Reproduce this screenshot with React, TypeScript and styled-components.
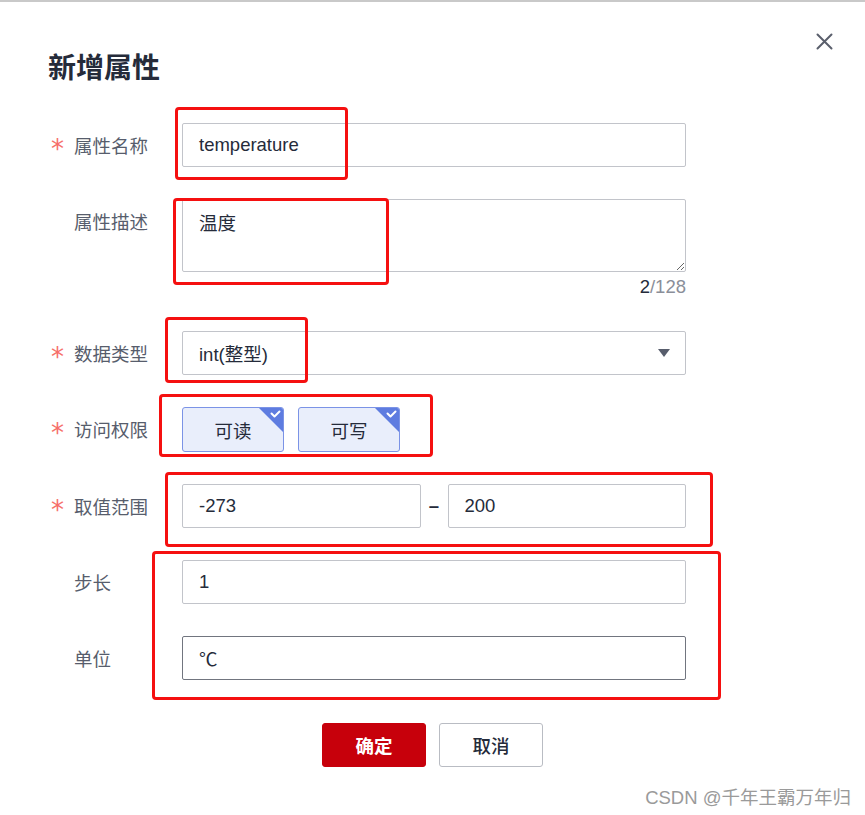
import React from "react";
import styled, { createGlobalStyle } from "styled-components";

const Global = createGlobalStyle`
  html, body { margin: 0; padding: 0; background: #fff; }
  body { font-family: "Liberation Sans", "Noto Sans CJK SC", sans-serif; }
  * { box-sizing: border-box; }
`;

const FONT = `"Liberation Sans", "Noto Sans CJK SC", sans-serif`;

const Dialog = styled.div`
  position: relative;
  width: 865px;
  height: 815px;
  border-top: 2px solid #c9c9c9;
  background: #fff;
  font-family: ${FONT};
`;

const Header = styled.div`
  display: flex;
  justify-content: space-between;
  align-items: flex-start;
  padding: 31px 32px 0 48px;
`;

const Title = styled.h1`
  margin: 13px 0 0 0;
  font-size: 28px;
  line-height: 40px;
  font-weight: 700;
  color: #252b3a;
  font-family: "Noto Sans CJK SC", sans-serif;
`;

const CloseBtn = styled.button`
  border: none;
  background: none;
  padding: 0;
  width: 17px;
  height: 17px;
  display: flex;
  cursor: pointer;
`;

const Form = styled.div`
  margin-top: 37px;
  padding-left: 52px;
`;

const Row = styled.div`
  display: grid;
  grid-template-columns: 130px 504px;
  align-items: start;
  margin-bottom: 32px;
`;

const Label = styled.div`
  display: flex;
  align-items: center;
  height: 44px;
  font-size: 18.5px;
  color: #575d6c;
`;

const Star = styled.span<{ $show: boolean }>`
  width: 23px;
  font-family: "DejaVu Sans", sans-serif;
  font-size: 26px;
  line-height: 1;
  color: #f66f6a;
  padding-top: 8px;
  margin-left: -1px;
  visibility: ${(p) => (p.$show ? "visible" : "hidden")};
`;

const Input = styled.div<{ $active?: boolean }>`
  flex: 1;
  height: 44px;
  border: 1px solid ${(p) => (p.$active ? "#71757f" : "#c2c4ca")};
  border-radius: 2px;
  padding: 0 16px;
  display: flex;
  align-items: center;
  font-size: 18.5px;
  color: #252b3a;
  background: #fff;
`;

const TextArea = styled.textarea`
  width: 504px;
  height: 73px;
  display: block;
  border: 1px solid #c2c4ca;
  border-radius: 2px;
  padding: 12px 16px;
  font-family: ${FONT};
  font-size: 18.5px;
  line-height: 24px;
  color: #252b3a;
  resize: vertical;
  outline: none;
`;

const Counter = styled.div`
  text-align: right;
  font-size: 18.5px;
  line-height: 24px;
  margin-top: 3px;
  color: #8a8e99;
  & b {
    font-weight: 400;
    color: #252b3a;
  }
`;

const SelectBox = styled(Input)`
  justify-content: space-between;
  padding-right: 15px;
`;

const Chips = styled.div`
  display: flex;
  gap: 14px;
`;

const Chip = styled.div`
  position: relative;
  width: 102px;
  height: 45px;
  border: 1px solid #7b93e6;
  border-radius: 3px;
  background: #e9eefb;
  display: flex;
  align-items: center;
  justify-content: center;
  font-size: 18.5px;
  color: #252b3a;
  overflow: hidden;
`;

const Corner = styled.svg`
  position: absolute;
  top: -1px;
  right: -1px;
`;

const Range = styled.div`
  display: flex;
  align-items: center;
`;

const Dash = styled.span`
  width: 27px;
  text-align: center;
  font-size: 18.5px;
  font-weight: 700;
  color: #252b3a;
`;

const Footer = styled.div`
  display: flex;
  justify-content: center;
  gap: 13px;
  margin-top: 43px;
`;

const Button = styled.button<{ $primary?: boolean }>`
  width: 104px;
  height: 44px;
  border-radius: 3px;
  border: 1px solid ${(p) => (p.$primary ? "#c7000b" : "#b9bcc3")};
  background: ${(p) => (p.$primary ? "#c7000b" : "#fff")};
  color: ${(p) => (p.$primary ? "#fff" : "#252b3a")};
  font-family: "Noto Sans CJK SC", sans-serif;
  font-size: 18.5px;
  font-weight: ${(p) => (p.$primary ? 700 : 500)};
  cursor: pointer;
`;

const Watermark = styled.div`
  position: absolute;
  right: 14px;
  bottom: 6px;
  font-size: 18.5px;
  color: #9a9a9a;
`;

const Mark = styled.div`
  position: absolute;
  border: 3px solid #f51010;
  border-radius: 4px;
  pointer-events: none;
`;

const marks = [
  { l: 175, t: 105, w: 173, h: 73 },
  { l: 173, t: 196, w: 216, h: 87 },
  { l: 165, t: 315, w: 143, h: 66 },
  { l: 159, t: 392, w: 274, h: 63 },
  { l: 165, t: 470, w: 548, h: 75 },
  { l: 152, t: 549, w: 569, h: 149 },
];

function Field({ label, required }: { label: string; required?: boolean }) {
  return (
    <Label>
      <Star $show={!!required}>*</Star>
      {label}
    </Label>
  );
}

function CheckChip({ text }: { text: string }) {
  return (
    <Chip>
      {text}
      <Corner width="26" height="26" viewBox="0 0 26 26">
        <polygon points="0,0 26,0 26,26" fill="#5e7ce0" />
        <polyline points="13.5,6.5 16.5,9.5 21.5,4.5" fill="none" stroke="#fff" strokeWidth="2" strokeLinecap="round" strokeLinejoin="round" />
      </Corner>
    </Chip>
  );
}

export default function App() {
  return (
    <>
      <Global />
      <Dialog>
        <Header>
          <Title>新增属性</Title>
          <CloseBtn aria-label="close">
            <svg width="17" height="17" viewBox="0 0 17 17">
              <path d="M1.5 1.5 L15.5 15.5 M15.5 1.5 L1.5 15.5" stroke="#5a5f6c" strokeWidth="2" strokeLinecap="round" />
            </svg>
          </CloseBtn>
        </Header>
        <Form>
          <Row>
            <Field label="属性名称" required />
            <Input>temperature</Input>
          </Row>
          <Row>
            <Field label="属性描述" />
            <div>
              <TextArea readOnly value="温度" />
              <Counter>
                <b>2</b>/128
              </Counter>
            </div>
          </Row>
          <Row>
            <Field label="数据类型" required />
            <SelectBox>
              int(整型)
              <svg width="12" height="8" viewBox="0 0 12 8">
                <polygon points="0,0 12,0 6,8" fill="#575d6c" />
              </svg>
            </SelectBox>
          </Row>
          <Row>
            <Field label="访问权限" required />
            <Chips>
              <CheckChip text="可读" />
              <CheckChip text="可写" />
            </Chips>
          </Row>
          <Row>
            <Field label="取值范围" required />
            <Range>
              <Input>-273</Input>
              <Dash>–</Dash>
              <Input>200</Input>
            </Range>
          </Row>
          <Row>
            <Field label="步长" />
            <Input>1</Input>
          </Row>
          <Row>
            <Field label="单位" />
            <Input $active>℃</Input>
          </Row>
        </Form>
        <Footer>
          <Button $primary>确定</Button>
          <Button>取消</Button>
        </Footer>
        {marks.map((m, i) => (
          <Mark key={i} style={{ left: m.l, top: m.t, width: m.w, height: m.h }} />
        ))}
        <Watermark>CSDN @千年王霸万年归</Watermark>
      </Dialog>
    </>
  );
}
